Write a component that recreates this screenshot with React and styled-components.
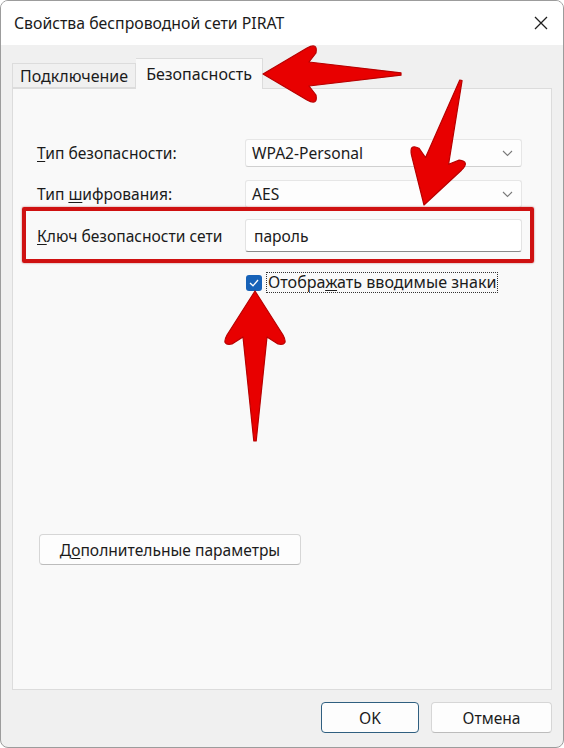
import React from 'react'
import styled, { createGlobalStyle } from 'styled-components'

const GlobalStyle = createGlobalStyle`
  html, body {
    margin: 0;
    padding: 0;
    background: #ffffff;
  }
  body {
    font-family: "Noto Sans", "Open Sans", sans-serif;
    color: #1b1b1b;
  }
  * { box-sizing: border-box; }
`

const Window = styled.div`
  position: relative;
  width: 564px;
  height: 748px;
  border: 1px solid #9c9c9c;
  border-radius: 8px;
  overflow: hidden;
  display: flex;
  flex-direction: column;
  background: #f0f0f0;
`

const TitleBar = styled.div`
  height: 44px;
  flex: none;
  background: #ffffff;
  display: flex;
  align-items: center;
  justify-content: space-between;
  padding: 0 14px 0 13px;
  font-size: 15.8px;
`

const Body = styled.div`
  flex: 1;
  display: flex;
  flex-direction: column;
  padding: 13px 11px 0 11px;
`

const Tabs = styled.div`
  display: flex;
  align-items: flex-end;
  height: 30px;
  position: relative;
  z-index: 1;
`

const Tab = styled.div`
  height: ${p => (p.$active ? '31px' : '25px')};
  margin-bottom: ${p => (p.$active ? '-1px' : '0')};
  padding: 0 ${p => (p.$active ? '10px' : '7px')};
  display: flex;
  align-items: center;
  font-size: 16px;
  background: ${p => (p.$active ? '#f9f9f9' : '#f0f0f0')};
  border: 1px solid #dcdcdc;
  border-bottom: ${p => (p.$active ? 'none' : '1px solid #dcdcdc')};
  border-left: ${p => (p.$active ? 'none' : '1px solid #dcdcdc')};
`

const Panel = styled.div`
  height: 602px;
  background: #f9f9f9;
  border: 1px solid #dcdcdc;
  padding: 0 0 0 24px;
  display: flex;
  flex-direction: column;
`

const FieldRow = styled.div`
  display: grid;
  grid-template-columns: 208px 277px;
  align-items: center;
  margin-top: ${p => p.$top || 0}px;
  font-size: 15.6px;
`

const HighlightRow = styled(FieldRow)`
  width: 512px;
  margin-left: -15px;
  padding: 8px 8px 7px 11px;
  border: 4px solid #cf1111;
  border-radius: 2px;
  box-shadow: 0 0 2px rgba(150, 0, 0, 0.6);
  position: relative;
`

const Label = styled.span`
  u { text-decoration-thickness: 1px; text-underline-offset: 2px; }
`

const Select = styled.div`
  height: 28px;
  background: #fdfdfd;
  border: 1px solid #e6e6e6;
  border-bottom-color: #d0d0d0;
  border-radius: 3px;
  display: flex;
  align-items: center;
  justify-content: space-between;
  padding: 0 8px 0 6px;
`

const TextInput = styled.div`
  height: 33px;
  background: #ffffff;
  border: 1px solid #e3e3e3;
  border-bottom: 1px solid #8a8a8a;
  border-radius: 3px;
  display: flex;
  align-items: center;
  padding: 0 8px;
`

const CheckRow = styled.div`
  display: flex;
  align-items: center;
  gap: 4px;
  margin: 9px 0 0 209px;
  font-size: 16.1px;
`

const CheckBox = styled.span`
  width: 16px;
  height: 16px;
  border-radius: 3px;
  background: #1762b8;
  display: flex;
  align-items: center;
  justify-content: center;
`

const FocusLabel = styled.span`
  border: 1px dotted #333;
  padding: 0 1px;
  line-height: 19px;
  u { text-decoration-thickness: 1px; text-underline-offset: 2px; }
`

const Button = styled.div`
  height: 31px;
  width: ${p => p.$w}px;
  display: flex;
  align-items: center;
  justify-content: center;
  background: #fdfdfd;
  border: ${p => (p.$primary ? '1.5px solid #2f5f80' : '1px solid #d6d6d6')};
  border-bottom-color: ${p => (p.$primary ? '#2f5f80' : '#bcbcbc')};
  border-radius: 4px;
  font-size: 15.6px;
  u { text-decoration-thickness: 1px; text-underline-offset: 2px; }
`

const AdvancedButton = styled(Button)`
  margin: ${p => p.$top}px 0 0 2px;
`

const Footer = styled.div`
  display: flex;
  justify-content: flex-end;
  gap: 12px;
  padding-top: 12px;
`

const Overlay = styled.svg`
  position: absolute;
  left: 0;
  top: 0;
  pointer-events: none;
  z-index: 5;
`

const Chevron = () => (
  <svg width="11" height="7" viewBox="0 0 11 7">
    <polyline points="1,1 5.5,5.5 10,1" fill="none" stroke="#7a7a7a" strokeWidth="1.1" />
  </svg>
)

const CloseIcon = () => (
  <svg width="16" height="16" viewBox="0 0 16 16">
    <path d="M2 2 L14 14 M14 2 L2 14" stroke="#1f1f1f" strokeWidth="1.3" />
  </svg>
)

const Check = () => (
  <svg width="10" height="8" viewBox="0 0 10 8">
    <polyline points="1,4 4,6.8 9,1" fill="none" stroke="#fff" strokeWidth="1.3" />
  </svg>
)

// red annotation arrow, tip at (x, y), tail along the rotated +y axis
const Arrow = ({ x, y, angle, len, wide = 0 }) => (
  <path
    transform={`translate(${x} ${y}) rotate(${angle})`}
    d={`M0,0 L${-26 - wide},44 Q${-32 - wide},55 ${-21 - wide},53 L-12,46 L-1.2,${len} L1.2,${len} L12,46 L${21 + wide},53 Q${32 + wide},55 ${26 + wide},44 Z`}
    fill="#e80000"
    stroke="#b80000"
    strokeWidth="1.2"
    strokeLinejoin="round"
  />
)

export default function App() {
  return (
    <>
      <GlobalStyle />
      <Window>
        <TitleBar>
          <span>Свойства беспроводной сети PIRAT</span>
          <CloseIcon />
        </TitleBar>
        <Body>
          <Tabs>
            <Tab>Подключение</Tab>
            <Tab $active>Безопасность</Tab>
          </Tabs>
          <Panel>
            <FieldRow $top={50}>
              <Label><u>Т</u>ип безопасности:</Label>
              <Select>
                <span>WPA2-Personal</span>
                <Chevron />
              </Select>
            </FieldRow>
            <FieldRow $top={13}>
              <Label>Тип <u>ш</u>ифрования:</Label>
              <Select>
                <span>AES</span>
                <Chevron />
              </Select>
            </FieldRow>
            <HighlightRow $top={-1}>
              <Label><u>К</u>люч безопасности сети</Label>
              <TextInput>пароль</TextInput>
            </HighlightRow>
            <CheckRow>
              <CheckBox><Check /></CheckBox>
              <FocusLabel>Отобра<u>ж</u>ать вводимые знаки</FocusLabel>
            </CheckRow>
            <AdvancedButton $w={262} $top={241}>
              Д<u>о</u>полнительные параметры
            </AdvancedButton>
          </Panel>
          <Footer>
            <Button $w={98} $primary>OK</Button>
            <Button $w={121}>Отмена</Button>
          </Footer>
        </Body>
        <Overlay width="564" height="748" viewBox="0 0 564 748">
          <Arrow x={262} y={73} angle={-90} len={138} />
          <Arrow x={423} y={204} angle={196.5} len={130} />
          <Arrow x={254} y={290} angle={0} len={150} wide={2} />
        </Overlay>
      </Window>
    </>
  )
}
